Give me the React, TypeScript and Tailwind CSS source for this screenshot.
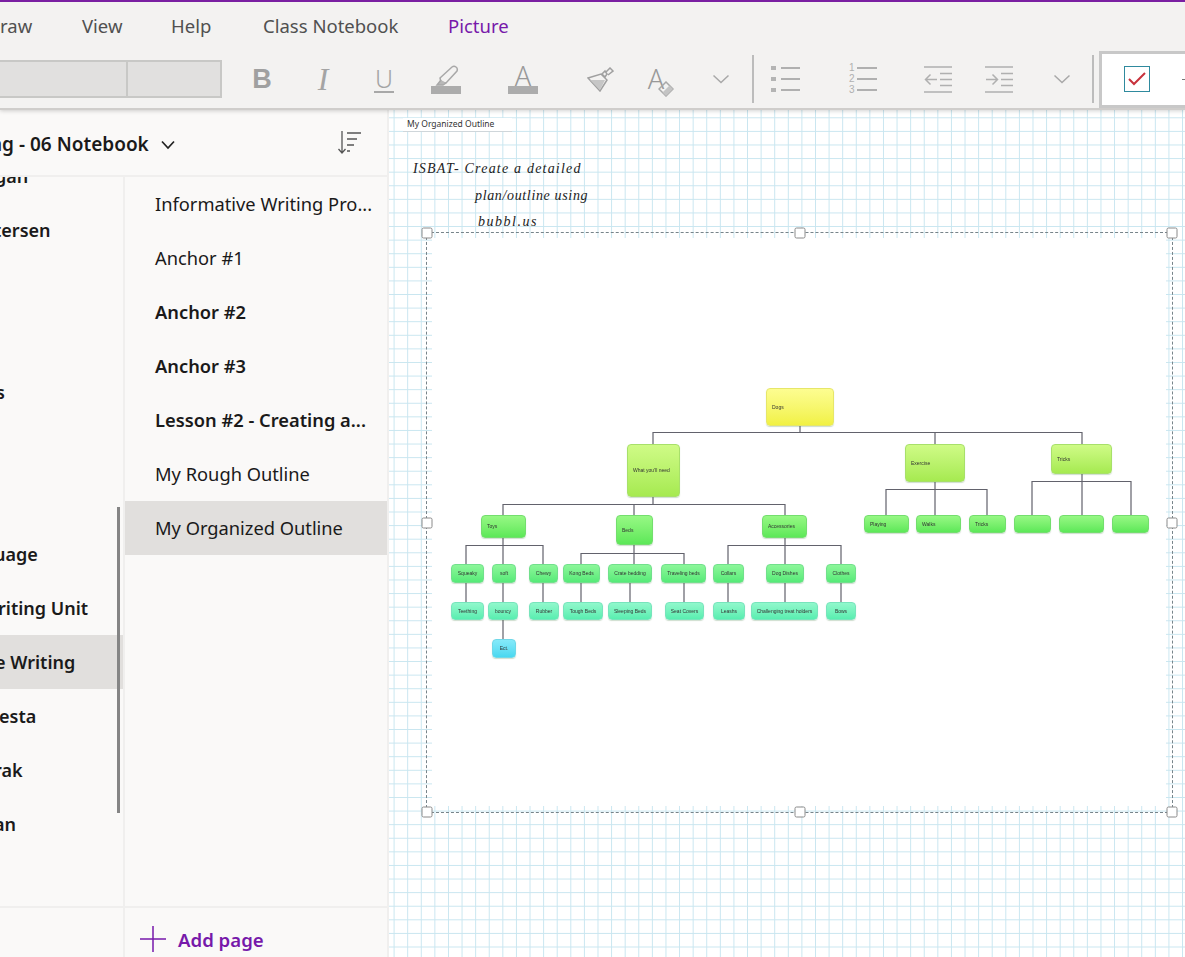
const SANS = "font-['Noto_Sans',sans-serif]";

const menuItems = [
  { label: "raw", cell: "w-[82px]", color: "text-[#505050]" },
  { label: "View", cell: "w-[89px]", color: "text-[#505050]" },
  { label: "Help", cell: "w-[92px]", color: "text-[#505050]" },
  { label: "Class Notebook", cell: "w-[185px]", color: "text-[#505050]" },
  { label: "Picture", cell: "w-[80px]", color: "text-[#7719aa]" },
];

const sections = [
  { label: "gan", ml: "-ml-[5px]" },
  { label: "tersen", ml: "-ml-[6px]" },
  { label: "", ml: "" },
  { label: "", ml: "" },
  { label: "s", ml: "-ml-[4px]" },
  { label: "", ml: "" },
  { label: "", ml: "" },
  { label: "uage", ml: "-ml-[6px]" },
  { label: "riting Unit", ml: "-ml-[2px]" },
  { label: "e Writing", ml: "-ml-[5px]", active: true },
  { label: "esta", ml: "-ml-[1px]" },
  { label: "rak", ml: "-ml-[6px]" },
  { label: "an", ml: "-ml-[6px]" },
];

const pages = [
  { label: "Informative Writing Pro..." },
  { label: "Anchor #1" },
  { label: "Anchor #2", bold: true },
  { label: "Anchor #3", bold: true },
  { label: "Lesson #2 - Creating a...", bold: true },
  { label: "My Rough Outline" },
  { label: "My Organized Outline", active: true },
];

const TONES = {
  yellow: "bg-gradient-to-b from-[#fdfd90] to-[#f1f142] border-[#e6e66a]",
  lime: "bg-gradient-to-b from-[#cffb86] to-[#a6ea50] border-[#a8e06a]",
  green: "bg-gradient-to-b from-[#96f884] to-[#5ce858] border-[#74de6e]",
  leaf: "bg-gradient-to-b from-[#8cf79a] to-[#55ea78] border-[#72e08c]",
  mint: "bg-gradient-to-b from-[#90f8cc] to-[#58eeb0] border-[#78e4bc]",
  sky: "bg-gradient-to-b from-[#84eafa] to-[#48d8f0] border-[#70d8e8]",
};

type Tone = keyof typeof TONES;
type MapNode = { x1: number; y1: number; x2: number; y2: number; tone: Tone; text: string; center?: boolean };

// page coordinates, shifted to the picture's origin when drawn
const PIC_X = 432;
const PIC_Y = 238;

const row = (y1: number, y2: number, tone: Tone, center: boolean, items: [number, number, string][]): MapNode[] =>
  items.map(([x1, x2, text]) => ({ x1, x2, y1, y2, tone, center, text }));

const nodes: MapNode[] = [
  { x1: 766, y1: 388, x2: 834, y2: 426, tone: "yellow", text: "Dogs" },
  { x1: 627, y1: 444, x2: 680, y2: 497, tone: "lime", text: "What you'll need" },
  { x1: 905, y1: 444, x2: 965, y2: 482, tone: "lime", text: "Exercise" },
  { x1: 1051, y1: 444, x2: 1112, y2: 474, tone: "lime", text: "Tricks" },
  { x1: 481, y1: 515, x2: 526, y2: 538, tone: "green", text: "Toys" },
  { x1: 616, y1: 515, x2: 653, y2: 545, tone: "green", text: "Beds" },
  { x1: 762, y1: 515, x2: 807, y2: 538, tone: "green", text: "Accessories" },
  ...row(515, 533, "green", false, [
    [864, 909, "Playing"],
    [916, 961, "Walks"],
    [969, 1006, "Tricks"],
    [1014, 1051, ""],
    [1059, 1104, ""],
    [1112, 1149, ""],
  ]),
  ...row(564, 583, "leaf", true, [
    [451, 484, "Squeaky"],
    [492, 516, "soft"],
    [529, 558, "Chewy"],
    [563, 600, "Kong Beds"],
    [608, 652, "Crate bedding"],
    [661, 706, "Traveling beds"],
    [713, 744, "Collars"],
    [766, 804, "Dog Dishes"],
    [826, 856, "Clothes"],
  ]),
  ...row(602, 620, "mint", true, [
    [451, 484, "Teething"],
    [488, 518, "bouncy"],
    [529, 559, "Rubber"],
    [563, 603, "Tough Beds"],
    [608, 652, "Sleeping Beds"],
    [665, 704, "Seat Covers"],
    [713, 745, "Leashs"],
    [751, 818, "Challenging treat holders"],
    [826, 856, "Bows"],
  ]),
  { x1: 492, y1: 639, x2: 516, y2: 658, tone: "sky", center: true, text: "Ect." },
];

const wires = [
  "M800 426V432.5M653 444V432.5H1082V444M935 432.5V444",
  "M653 497V504.5M503 515V504.5H785V515M634 504.5V515",
  "M503 538V545.5M466 564V545.5H543V564M503 545.5V564",
  "M634 545V553.5M581 564V553.5H684V564M634 553.5V564",
  "M785 538V545.5M728 564V545.5H841V564M785 545.5V564",
  "M935 482V489.5M886 515V489.5H987V515M935 489.5V515",
  "M1082 474V481.5M1032 515V481.5H1131V515M1082 481.5V515",
  "M466 583V602M503 583V602M543 583V602M581 583V602M630 583V602M684 583V602M728 583V602M785 583V602M841 583V602M503 620V639",
];

const handles = [
  "left-0 top-0",
  "left-1/2 top-0",
  "left-full top-0",
  "left-0 top-1/2",
  "left-full top-1/2",
  "left-0 top-full",
  "left-1/2 top-full",
  "left-full top-full",
];

function Chevron() {
  return (
    <svg width="18" height="10" viewBox="0 0 18 10" fill="none" stroke="#a8a8a8" strokeWidth="1.5">
      <path d="M1.5 1.5 9 8.5l7.5-7" />
    </svg>
  );
}

function Bar() {
  return <div className="h-[8px] w-[30px] bg-[#acacac]" />;
}

function Highlighter() {
  return (
    <div className="flex flex-col items-center">
      <svg width="30" height="21" viewBox="0 0 30 21" fill="none" stroke="#a8a8a8" strokeWidth="1.5">
        <path d="M9 13 21 2q2-1.500 4 0t1 4L15 18l-5-1z" />
        <path d="M10 15 6 20h6l3-2" fill="#b8b8b8" />
      </svg>
      <Bar />
    </div>
  );
}

function ColorA() {
  return (
    <div className="flex flex-col items-center">
      <span className="h-[21px] text-[27px] font-light leading-[22px] text-[#999999] font-['Noto_Sans',sans-serif]">A</span>
      <Bar />
    </div>
  );
}

function Brush() {
  return (
    <svg width="27" height="25" viewBox="0 0 27 25" fill="none" stroke="#a0a0a0" strokeWidth="1.5">
      <path d="M1 11 14 7l6 6-7 11z" />
      <path d="M3 13 18 13 13 23z" fill="#c6c6c6" stroke="none" />
      <path d="m15 7 3-3 2 3-2 3zM19 5l4-4 3 3-5 4" />
    </svg>
  );
}

function ClearFormat() {
  return (
    <div className="flex items-end">
      <span className="text-[27px] font-light leading-[24px] text-[#999999] font-['Noto_Sans',sans-serif]">A</span>
      <svg width="16" height="16" viewBox="0 0 16 16" className="-ml-[6px] -mb-[6px]" fill="none" stroke="#a8a8a8" strokeWidth="1.5">
        <path d="M8 1 15 8 8 15 1 8z" />
        <path d="M4.500 11.500 11.500 4.500 15 8 8 15z" fill="#c4c4c4" stroke="none" />
      </svg>
    </div>
  );
}

function Bullets() {
  return (
    <div className="flex flex-col gap-[7px]">
      {[0, 1, 2].map((i) => (
        <div key={i} className="flex items-center gap-[5px]">
          <div className="h-[4px] w-[5px] bg-[#b4b4b4]" />
          <div className="h-[2px] w-[19px] bg-[#b0b0b0]" />
        </div>
      ))}
    </div>
  );
}

function Numbering() {
  return (
    <div className="flex flex-col">
      {["1", "2", "3"].map((n) => (
        <div key={n} className="flex h-[11px] items-center gap-[2px]">
          <span className="w-[6px] text-[10px] leading-none text-[#b0b0b0] font-['Liberation_Sans',sans-serif]">{n}</span>
          <div className="h-[2px] w-[20px] bg-[#b0b0b0]" />
        </div>
      ))}
    </div>
  );
}

function IndentIcon({ out }: { out?: boolean }) {
  return (
    <svg width="28" height="27" viewBox="0 0 28 27" fill="none" stroke="#b0b0b0" strokeWidth="1.500">
      <path d="M0 1h28M0 26h28M16 7.500h12M16 13.500h12M16 19.500h12" />
      {out ? <path d="M13 13.500H1.500M6.500 8.500l-5 5 5 5" /> : <path d="M1 13.500h11.500M7.500 8.500l5 5-5 5" />}
    </svg>
  );
}

function Divider() {
  return <div className="h-[48px] w-[2px] shrink-0 bg-[#bcbcbc]" />;
}

function Cell({ w, children }: { w: string; children: React.ReactNode }) {
  return <div className={`${w} flex shrink-0 items-center justify-center`}>{children}</div>;
}

function Ribbon() {
  return (
    <div className={`relative z-10 h-[110px] shrink-0 overflow-hidden border-t-2 border-b-2 border-t-[#7a1fa2] border-b-[#cfcdcb] bg-[#f3f2f1] shadow-[0_1px_4px_rgba(0,0,0,0.18)] ${SANS}`}>
      <div className="flex h-[48px] items-center text-[18.500px]">
        {menuItems.map((m) => (
          <div key={m.label} className={`${m.cell} shrink-0 ${m.color}`}>
            {m.label}
          </div>
        ))}
      </div>
      <div className="flex h-[58px] items-center">
        <div className="-ml-[2px] h-[38px] w-[130px] shrink-0 border-2 border-[#c8c8c6] bg-[#e1e0df]" />
        <div className="h-[38px] w-[94px] shrink-0 border-2 border-l-0 border-[#c8c8c6] bg-[#e1e0df]" />
        <div className="w-[10px] shrink-0" />
        <Cell w="w-[60px]">
          <span className="text-[27px] font-bold leading-none text-[#a0a0a0] font-['Liberation_Sans',sans-serif]">B</span>
        </Cell>
        <Cell w="w-[62px]">
          <span className="text-[32px] italic leading-none text-[#a4a4a4] font-['Liberation_Serif',serif]">I</span>
        </Cell>
        <Cell w="w-[60px]">
          <span className="border-b-2 border-[#a8a8a8] px-[1px] text-[25px] font-light leading-[26px] text-[#a4a4a4] font-['Noto_Sans',sans-serif]">U</span>
        </Cell>
        <Cell w="w-[64px]">
          <Highlighter />
        </Cell>
        <Cell w="w-[90px]">
          <ColorA />
        </Cell>
        <Cell w="w-[64px]">
          <Brush />
        </Cell>
        <Cell w="w-[58px]">
          <ClearFormat />
        </Cell>
        <Cell w="w-[62px]">
          <Chevron />
        </Cell>
        <Divider />
        <Cell w="w-[62px]">
          <Bullets />
        </Cell>
        <Cell w="w-[94px]">
          <Numbering />
        </Cell>
        <Cell w="w-[56px]">
          <IndentIcon out />
        </Cell>
        <Cell w="w-[66px]">
          <IndentIcon />
        </Cell>
        <Cell w="w-[60px]">
          <Chevron />
        </Cell>
        <Divider />
        <div className="ml-[5px] flex h-[57px] w-[200px] shrink-0 items-center border-[3px] border-[#c8c8c8] bg-white pl-[22px]">
          <div className="flex h-[26px] w-[26px] items-center justify-center border border-[#2f8a9e]">
            <svg width="18" height="14" viewBox="0 0 18 14" fill="none" stroke="#c8323c" strokeWidth="2">
              <path d="m1 7 5 5L17 1" />
            </svg>
          </div>
          <div className="ml-[32px] h-[1px] w-[4px] bg-[#777777]" />
        </div>
      </div>
    </div>
  );
}

function NotebookPane() {
  return (
    <div className={`flex w-[389px] shrink-0 flex-col border-r-2 border-[#f0efee] bg-[#faf9f8] text-[#1a1a1a] ${SANS}`}>
      <div className="flex h-[67px] shrink-0 items-center justify-between border-b-2 border-[#f0efee] pr-[26px]">
        <div className="-ml-[10px] flex items-center gap-[12px] pt-[4px]">
          <span className="text-[19px] font-semibold leading-none whitespace-nowrap">ng - 06 Notebook</span>
          <svg width="14" height="10" viewBox="0 0 14 10" fill="none" stroke="#222222" strokeWidth="1.7">
            <path d="m1 1.500 6 6.500 6-6.500" />
          </svg>
        </div>
        <svg width="23" height="23" viewBox="0 0 23 23" fill="none" stroke="#555555" strokeWidth="1.300">
          <path d="M4 0v22M.500 18l3.500 4 3.500-4M9 2h14M9 8h10M9 14h7M9 20h3" />
        </svg>
      </div>
      <div className="relative flex min-h-0 flex-1">
        <div className="w-[125px] shrink-0 overflow-hidden border-r-2 border-[#f0efee]">
          <div className="-mt-[28px]">
            {sections.map((s, i) => (
              <div key={i} className={`flex h-[54px] items-center overflow-hidden whitespace-nowrap text-[18px] font-semibold ${s.active ? "bg-[#e1dfdd]" : ""}`}>
                <span className={s.ml}>{s.label}</span>
              </div>
            ))}
          </div>
        </div>
        <div className="min-w-0 flex-1">
          {pages.map((p) => (
            <div
              key={p.label}
              className={`flex h-[54px] items-center whitespace-nowrap pl-[30px] text-[18.300px] ${p.bold ? "font-semibold" : ""} ${p.active ? "bg-[#e1dfdd]" : ""}`}
            >
              {p.label}
            </div>
          ))}
        </div>
        <div className="absolute left-[117px] top-[330px] h-[306px] w-[3px] bg-[#858585]" />
      </div>
      <div className="flex h-[51px] shrink-0 border-t-2 border-[#f0efee]">
        <div className="w-[125px] shrink-0 border-r-2 border-[#f0efee]" />
        <div className="flex items-center pl-[15px] pt-[15px] text-[#7719aa]">
          <svg width="26" height="26" viewBox="0 0 26 26" fill="none" stroke="#7719aa" strokeWidth="1.500" className="-mt-[2px]">
            <path d="M13 0v26M0 13h26" />
          </svg>
          <span className="ml-[12px] text-[18.600px] font-semibold">Add page</span>
        </div>
      </div>
    </div>
  );
}

function MapBox({ n }: { n: MapNode }) {
  return (
    <div
      className={`absolute flex items-center overflow-hidden rounded-[4px] border whitespace-nowrap font-['Liberation_Sans',sans-serif] text-[5px] leading-none text-[#333333] shadow-[0_1px_1px_rgba(60,120,60,0.25)] ${TONES[n.tone]} ${n.center ? "justify-center" : "pl-[5px]"}`}
      style={{ left: n.x1 - PIC_X, top: n.y1 - PIC_Y, width: n.x2 - n.x1, height: n.y2 - n.y1 }}
    >
      {n.text}
    </div>
  );
}

function Canvas() {
  return (
    <div className="relative min-w-0 flex-1 overflow-hidden bg-white bg-[linear-gradient(to_right,#c9e6f0_1px,transparent_1px),linear-gradient(to_bottom,#c9e6f0_1px,transparent_1px)] bg-[size:13.600px_13.600px] bg-[position:4.600px_7.300px]">
      <div className="absolute left-[14px] top-[8px] w-[109px] border-b border-[#cfd6da] pb-[1px] pl-[4px] bg-white font-['Noto_Sans',sans-serif] text-[8.500px] leading-[12px] text-[#333333]">
        My Organized Outline
      </div>

      <div className="absolute left-[24px] top-[50px] whitespace-nowrap font-['Liberation_Serif',serif] text-[14px] italic leading-[18px] tracking-[1.200px] text-[#222222]">
        ISBAT- Create a detailed
      </div>
      <div className="absolute left-[86px] top-[77px] whitespace-nowrap font-['Liberation_Serif',serif] text-[14px] italic leading-[18px] tracking-[0.650px] text-[#222222]">
        plan/outline using
      </div>
      <div className="absolute left-[89px] top-[103px] whitespace-nowrap font-['Liberation_Serif',serif] text-[14px] italic leading-[18px] tracking-[1.500px] text-[#222222]">
        bubbl.us
      </div>

      <div className="absolute left-[37px] top-[122px] h-[581px] w-[747px] border border-dashed border-[#77848a]">
        <div className="absolute left-[5px] top-[5px] h-[568px] w-[734px] bg-white">
          <div className="absolute inset-0 blur-[0.3px]">
            <svg className="absolute inset-0" width="734" height="568" viewBox="432 238 734 568" fill="none" stroke="#62626c" strokeWidth="1.200">
              {wires.map((d) => (
                <path key={d} d={d} />
              ))}
            </svg>
            {nodes.map((n, i) => (
              <MapBox key={i} n={n} />
            ))}
          </div>
        </div>
        {handles.map((h) => (
          <div key={h} className={`absolute h-[11px] w-[11px] -translate-x-1/2 -translate-y-1/2 rounded-[2px] border border-[#8a8a8a] bg-white ${h}`} />
        ))}
      </div>
    </div>
  );
}

export default function App() {
  return (
    <div className="flex h-[957px] w-[1185px] flex-col overflow-hidden bg-white">
      <Ribbon />
      <div className="flex min-h-0 flex-1">
        <NotebookPane />
        <Canvas />
      </div>
    </div>
  );
}
